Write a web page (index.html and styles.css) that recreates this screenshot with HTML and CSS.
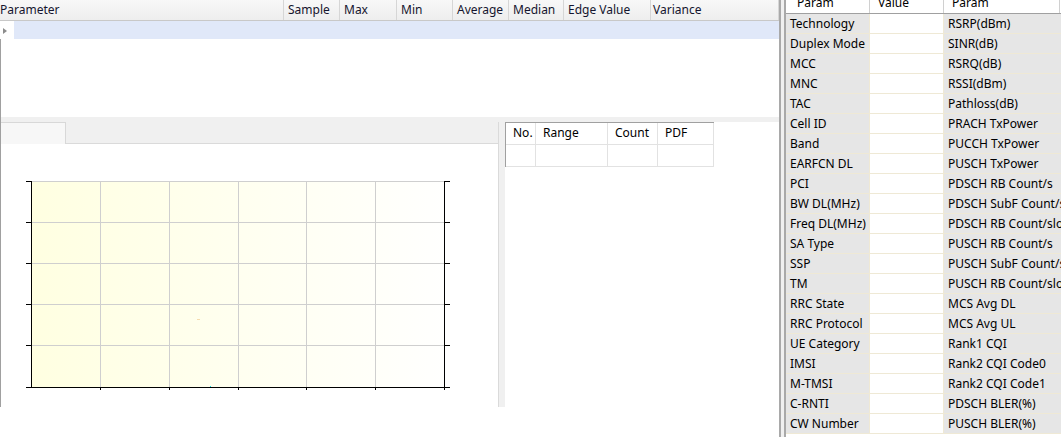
FILE: index.html
```html
<!DOCTYPE html>
<html>
<head>
<meta charset="utf-8">
<link rel="stylesheet" href="styles.css">
</head>
<body>
<div class="app">
  <section class="left">
    <div class="grid-head">
      <div class="gh w-param">Parameter</div>
      <div class="gh w-sample">Sample</div>
      <div class="gh w-max">Max</div>
      <div class="gh w-min">Min</div>
      <div class="gh w-avg">Average</div>
      <div class="gh w-med">Median</div>
      <div class="gh w-edge">Edge Value</div>
      <div class="gh w-var">Variance</div>
    </div>
    <div class="sel-row">
      <div class="row-ind"><span class="tri"></span></div>
      <div class="sel-fill"></div>
    </div>
    <div class="grid-empty"></div>
    <div class="lower">
      <div class="chart-pane">
        <div class="tabbar">
          <div class="tab"></div>
          <div class="tab-rest"></div>
        </div>
        <div class="plot-area">
          <svg class="chart" width="440" height="220" viewBox="0 0 440 220" shape-rendering="crispEdges">
            <defs>
              <linearGradient id="bg" x1="0" y1="0" x2="1" y2="0">
                <stop offset="0" stop-color="#ffffe1"/>
                <stop offset="1" stop-color="#fffffe"/>
              </linearGradient>
            </defs>
            <rect x="10" y="5" width="413" height="206" fill="url(#bg)"/>
            <g stroke="#cfcfcf" stroke-width="1">
              <line x1="10" y1="5.5" x2="424" y2="5.5"/>
              <line x1="10" y1="46.5" x2="424" y2="46.5"/>
              <line x1="10" y1="87.5" x2="424" y2="87.5"/>
              <line x1="10" y1="128.5" x2="424" y2="128.5"/>
              <line x1="10" y1="169.5" x2="424" y2="169.5"/>
              <line x1="79.5" y1="5" x2="79.5" y2="211"/>
              <line x1="148.5" y1="5" x2="148.5" y2="211"/>
              <line x1="217.5" y1="5" x2="217.5" y2="211"/>
              <line x1="285.5" y1="5" x2="285.5" y2="211"/>
              <line x1="354.5" y1="5" x2="354.5" y2="211"/>
            </g>
            <line x1="176" y1="143.5" x2="179" y2="143.5" stroke="#f6dcae"/>
            <rect x="189" y="210" width="1" height="1" fill="#19e0e8"/>
            <g stroke="#000" stroke-width="1">
              <line x1="10.5" y1="5" x2="10.5" y2="212"/>
              <line x1="423.5" y1="5" x2="423.5" y2="212"/>
              <line x1="5" y1="211.5" x2="429" y2="211.5"/>
              <line x1="5" y1="5.5" x2="10" y2="5.5"/>
              <line x1="5" y1="46.5" x2="10" y2="46.5"/>
              <line x1="5" y1="87.5" x2="10" y2="87.5"/>
              <line x1="5" y1="128.5" x2="10" y2="128.5"/>
              <line x1="5" y1="169.5" x2="10" y2="169.5"/>
              <line x1="424" y1="5.5" x2="429" y2="5.5"/>
              <line x1="424" y1="46.5" x2="429" y2="46.5"/>
              <line x1="424" y1="87.5" x2="429" y2="87.5"/>
              <line x1="424" y1="128.5" x2="429" y2="128.5"/>
              <line x1="424" y1="169.5" x2="429" y2="169.5"/>
              <line x1="79.5" y1="212" x2="79.5" y2="214"/>
              <line x1="148.5" y1="212" x2="148.5" y2="214"/>
              <line x1="217.5" y1="212" x2="217.5" y2="214"/>
              <line x1="285.5" y1="212" x2="285.5" y2="214"/>
              <line x1="354.5" y1="212" x2="354.5" y2="214"/>
              <line x1="423.5" y1="212" x2="423.5" y2="214"/>
            </g>
          </svg>
        </div>
      </div>
      <div class="hist">
        <div class="htable">
          <div class="hc">No.</div>
          <div class="hc">Range</div>
          <div class="hc">Count</div>
          <div class="hc">PDF</div>
          <div class="hc"></div>
          <div class="hc"></div>
          <div class="hc"></div>
          <div class="hc"></div>
        </div>
      </div>
    </div>
  </section>
  <div class="split"></div>
  <section class="right">
    <div class="phead">
      <div class="ph ph-first">Param</div>
      <div class="ph">Value</div>
      <div class="ph">Param</div>
      <div class="ph ph-last"></div>
    </div>
    <div class="prow"><div class="k">Technology</div><div class="v"></div><div class="k">RSRP(dBm)</div></div>
    <div class="prow"><div class="k">Duplex Mode</div><div class="v"></div><div class="k">SINR(dB)</div></div>
    <div class="prow"><div class="k">MCC</div><div class="v"></div><div class="k">RSRQ(dB)</div></div>
    <div class="prow"><div class="k">MNC</div><div class="v"></div><div class="k">RSSI(dBm)</div></div>
    <div class="prow"><div class="k">TAC</div><div class="v"></div><div class="k">Pathloss(dB)</div></div>
    <div class="prow"><div class="k">Cell ID</div><div class="v"></div><div class="k">PRACH TxPower</div></div>
    <div class="prow"><div class="k">Band</div><div class="v"></div><div class="k">PUCCH TxPower</div></div>
    <div class="prow"><div class="k">EARFCN DL</div><div class="v"></div><div class="k">PUSCH TxPower</div></div>
    <div class="prow"><div class="k">PCI</div><div class="v"></div><div class="k">PDSCH RB Count/s</div></div>
    <div class="prow"><div class="k">BW DL(MHz)</div><div class="v"></div><div class="k">PDSCH SubF Count/s</div></div>
    <div class="prow"><div class="k">Freq DL(MHz)</div><div class="v"></div><div class="k">PDSCH RB Count/slot</div></div>
    <div class="prow"><div class="k">SA Type</div><div class="v"></div><div class="k">PUSCH RB Count/s</div></div>
    <div class="prow"><div class="k">SSP</div><div class="v"></div><div class="k">PUSCH SubF Count/s</div></div>
    <div class="prow"><div class="k">TM</div><div class="v"></div><div class="k">PUSCH RB Count/slot</div></div>
    <div class="prow"><div class="k">RRC State</div><div class="v"></div><div class="k">MCS Avg DL</div></div>
    <div class="prow"><div class="k">RRC Protocol</div><div class="v"></div><div class="k">MCS Avg UL</div></div>
    <div class="prow"><div class="k">UE Category</div><div class="v"></div><div class="k">Rank1 CQI</div></div>
    <div class="prow"><div class="k">IMSI</div><div class="v"></div><div class="k">Rank2 CQI Code0</div></div>
    <div class="prow"><div class="k">M-TMSI</div><div class="v"></div><div class="k">Rank2 CQI Code1</div></div>
    <div class="prow"><div class="k">C-RNTI</div><div class="v"></div><div class="k">PDSCH BLER(%)</div></div>
    <div class="prow"><div class="k">CW Number</div><div class="v"></div><div class="k">PUSCH BLER(%)</div></div>
  </section>
</div>
</body>
</html>
```

FILE: styles.css
```css
html, body {
  margin: 0;
  padding: 0;
}
body {
  width: 1061px;
  height: 437px;
  overflow: hidden;
  background: #fff;
  font-family: "Noto Sans", "DejaVu Sans", sans-serif;
  font-size: 12px;
  color: #000;
}
.app {
  display: flex;
  height: 437px;
}

/* ---------- left panel ---------- */
.left {
  width: 779px;
  flex: none;
  display: flex;
  flex-direction: column;
  background: #fff;
}
.grid-head {
  display: flex;
  height: 21px;
  box-sizing: border-box;
  border-bottom: 1px solid #c8c8c8;
  background: linear-gradient(#f8f8f8, #eeeeee);
  color: #15152e;
}
.gh {
  box-sizing: border-box;
  border-right: 1px solid #d6d6d6;
  padding-left: 4px;
  line-height: 19px;
  white-space: nowrap;
  overflow: hidden;
}
.w-param { width: 284px; padding-left: 0; }
.w-sample { width: 56px; }
.w-max { width: 57px; }
.w-min { width: 56px; }
.w-avg { width: 56px; }
.w-med { width: 55px; }
.w-edge { width: 87px; }
.w-var { width: 128px; padding-left: 2px; }

.sel-row {
  display: flex;
  height: 18px;
}
.row-ind {
  width: 14px;
  flex: none;
}
.tri {
  display: block;
  width: 0;
  height: 0;
  margin: 7px 0 0 3px;
  border-left: 4px solid #8c8c8c;
  border-top: 3px solid transparent;
  border-bottom: 3px solid transparent;
}
.sel-fill {
  flex: 1;
  background: #e0e8f9;
}
.grid-empty {
  height: 78px;
  border-left: 1px solid #a0a0a0;
}
.lower {
  height: 290px;
  box-sizing: border-box;
  padding-top: 5px;
  background: #f0f0f0;
  border-left: 1px solid #a0a0a0;
  display: flex;
}
.chart-pane {
  width: 498px;
  flex: none;
  box-sizing: border-box;
  border-right: 1px solid #dadada;
  display: flex;
  flex-direction: column;
}
.tabbar {
  display: flex;
  height: 22px;
  flex: none;
}
.tab {
  width: 65px;
  box-sizing: border-box;
  border-top: 1px solid #d8d8d8;
  border-right: 1px solid #d8d8d8;
  background: #f7f7f7;
}
.tab-rest {
  flex: 1;
  box-sizing: border-box;
  border-bottom: 1px solid #dadada;
}
.plot-area {
  flex: 1;
  background: #fff;
  padding: 32px 0 0 20px;
}
.chart {
  display: block;
}
.hist {
  flex: 1;
  margin-left: 6px;
  background: #fff;
}
.htable {
  display: grid;
  grid-template-columns: 30px 72px 50px 56px;
  width: max-content;
  border-top: 1px solid #a0a0a0;
  border-left: 1px solid #a0a0a0;
}
.hc {
  box-sizing: border-box;
  height: 22px;
  border-right: 1px solid #e2e2e2;
  border-bottom: 1px solid #e2e2e2;
  padding-left: 7px;
  line-height: 20px;
  color: #000;
  white-space: nowrap;
}

/* ---------- splitter ---------- */
.split {
  width: 7px;
  flex: none;
  background: linear-gradient(to right, #a9a9a9 0 2px, #f0f0f0 2px 5px, #a9a9a9 5px 7px);
}

/* ---------- right panel ---------- */
.right {
  flex: 1;
  overflow: hidden;
  background: #fff;
}
.phead {
  display: grid;
  grid-template-columns: 84px 74px 116px 1fr;
  height: 21px;
  margin-top: -7px;
  box-sizing: border-box;
  border-bottom: 1px solid #a0a0a0;
  background: #fff;
}
.ph {
  box-sizing: border-box;
  border-right: 1px solid #d0d0d0;
  padding-left: 8px;
  line-height: 19px;
  white-space: nowrap;
}
.ph-first { padding-left: 11px; }
.ph-last { border-right: none; }
.prow {
  display: grid;
  grid-template-columns: 84px 74px 160px;
  height: 20px;
}
.prow > div {
  box-sizing: border-box;
  border-right: 1px solid #efe9d5;
  border-bottom: 1px solid #efe9d5;
  padding-left: 4px;
  line-height: 19px;
  white-space: nowrap;
  overflow: hidden;
}
.k { background: #e6e6e6; }
.v { background: #fff; }
```
